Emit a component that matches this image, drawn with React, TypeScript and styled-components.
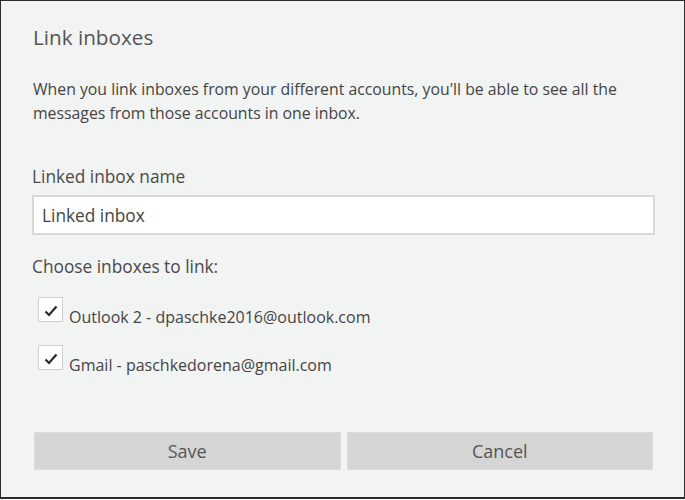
import React from "react";
import styled, { createGlobalStyle } from "styled-components";

const Global = createGlobalStyle`
  html, body { margin: 0; padding: 0; background: #ffffff; }
  body { font-family: "Open Sans", "Noto Sans", sans-serif; }
  * { box-sizing: border-box; }
`;

const Frame = styled.div`
  width: 685px;
  height: 499px;
  background: #f2f3f3;
  border: 1px solid #2b2b2b;
  border-bottom-width: 2px;
  padding: 23px 29px 0 31px;
  display: flex;
  flex-direction: column;
  color: #4a4a4a;
`;

const Title = styled.h1`
  margin: 0;
  padding-left: 1px;
  font-weight: 400;
  font-size: 20.7px;
  line-height: 26px;
  color: #555;
`;

const Intro = styled.p`
  margin: 27px 0 0 0;
  padding-left: 1px;
  font-size: 15.8px;
  line-height: 24px;
  color: #444;
  white-space: nowrap;
`;

const FieldLabel = styled.div<{ $top: number }>`
  margin-top: ${(p) => p.$top}px;
  font-size: 17.3px;
  line-height: 22px;
  color: #4a4a4a;
`;

const TextInput = styled.input`
  margin-top: 7px;
  width: 100%;
  height: 40px;
  border: 2px solid #d8d8d8;
  background: #fff;
  padding: 0 8px;
  font-family: inherit;
  font-size: 17.3px;
  color: #444;
  outline: none;
  flex-shrink: 0;
`;

const List = styled.div`
  margin-top: 19px;
  display: flex;
  flex-direction: column;
  gap: 23px;
  padding-left: 6px;
`;

const CheckRow = styled.label`
  display: flex;
  align-items: flex-end;
  gap: 6px;
  height: 25px;
`;

const Box = styled.span`
  width: 25px;
  height: 25px;
  border: 1px solid #cfcfcf;
  background: #fff;
  display: flex;
  align-items: center;
  justify-content: center;
  flex-shrink: 0;
  padding-top: 3px;
`;

const RowText = styled.span`
  font-size: 16px;
  line-height: 20px;
  color: #444;
  white-space: nowrap;
  transform: translateY(5px);
`;

const Buttons = styled.div`
  margin-top: 62px;
  display: flex;
  gap: 6px;
  padding: 0 2px 0 2px;
`;

const Button = styled.button`
  flex: 1;
  height: 38px;
  background: #d5d5d5;
  border: 1px solid #dedede;
  font-family: inherit;
  font-size: 18px;
  color: #555;
  padding: 0;
`;

const Check = () => (
  <svg width="14" height="12" viewBox="0 0 14 12">
    <path d="M1.5 6.5 L5 10 L12.5 1.5" fill="none" stroke="#2a2a2a" strokeWidth="2.2" />
  </svg>
);

const accounts = [
  "Outlook 2 - dpaschke2016@outlook.com",
  "Gmail - paschkedorena@gmail.com",
];

export default function App() {
  return (
    <>
      <Global />
      <Frame>
        <Title>Link inboxes</Title>
        <Intro>
          When you link inboxes from your different accounts, you'll be able to see all the
          <br />
          messages from those accounts in one inbox.
        </Intro>
        <FieldLabel $top={41}>Linked inbox name</FieldLabel>
        <TextInput defaultValue="Linked inbox" />
        <FieldLabel $top={21}>Choose inboxes to link:</FieldLabel>
        <List>
          {accounts.map((a) => (
            <CheckRow key={a}>
              <Box>
                <Check />
              </Box>
              <RowText>{a}</RowText>
            </CheckRow>
          ))}
        </List>
        <Buttons>
          <Button>Save</Button>
          <Button>Cancel</Button>
        </Buttons>
      </Frame>
    </>
  );
}
